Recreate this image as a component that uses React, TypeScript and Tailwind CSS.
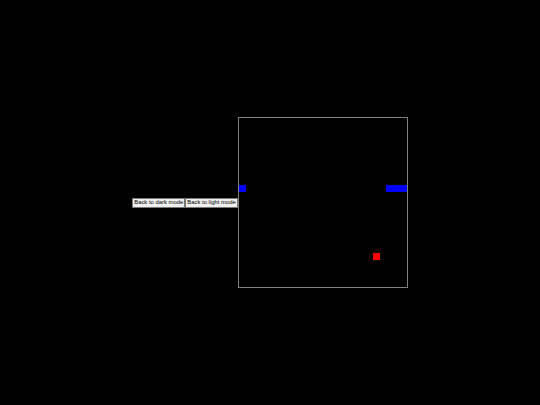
export default function App() {
  const snake = [
    { x: 0, y: 67 },
    { x: 147, y: 67 },
    { x: 154, y: 67 },
    { x: 161, y: 67 },
  ]
  const food = { x: 134, y: 135 }

  return (
    <div className="min-h-screen w-full bg-black flex items-center justify-center font-['Liberation_Sans',Arial,sans-serif]">
      <div className="flex items-center">
        <button className="h-[10px] px-[1px] text-[5.9px] leading-none text-black bg-[#efefef] border border-[#767676]">
          Back to dark mode
        </button>
        <button className="h-[10px] px-[1px] text-[5.9px] leading-none text-black bg-[#efefef] border border-[#767676]">
          Back to light mode
        </button>
        <div className="relative w-[170px] h-[171px] border border-[#808080] bg-black">
          {snake.map((c, i) => (
            <div
              key={i}
              className="absolute w-[7px] h-[7px] bg-[#0000ff]"
              style={{ left: c.x, top: c.y }}
            />
          ))}
          <div
            className="absolute w-[7px] h-[7px] bg-[#ff0000]"
            style={{ left: food.x, top: food.y }}
          />
        </div>
      </div>
    </div>
  )
}
